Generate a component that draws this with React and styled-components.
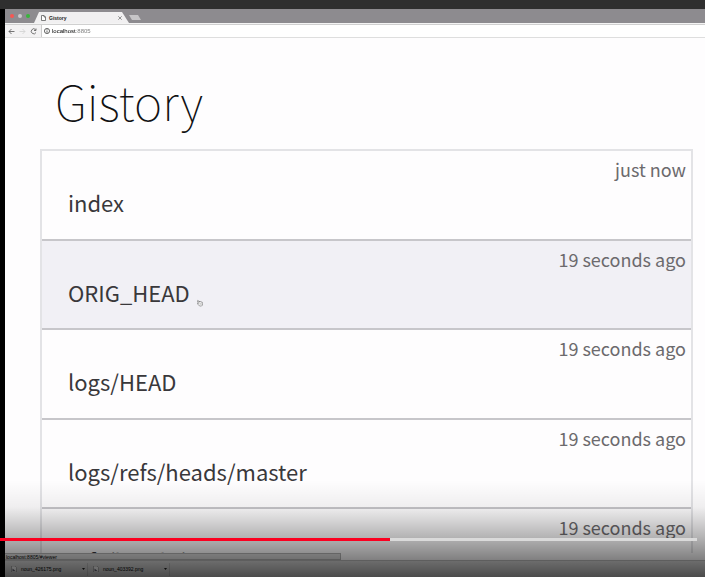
import React from "react";
import styled, { createGlobalStyle } from "styled-components";

const GlobalStyle = createGlobalStyle`
  *, *::before, *::after { box-sizing: border-box; }
  html, body { margin: 0; padding: 0; overflow: hidden; background: #fff; }
  button, input { font: inherit; color: inherit; border: 0; padding: 0; margin: 0; background: none; }
`;

const Page = styled.div`
  height: 100vh;
  display: flex;
  flex-direction: column;
  padding-bottom: 5px;
`;

const Player = styled.main`
  position: relative;
  flex: 1;
  min-height: 0;
  display: flex;
  padding: 9px 0 0 5px;
  background: linear-gradient(#2f2f2f 9px, #000 9px);
  overflow: hidden;
`;

const Browser = styled.section`
  flex: 1;
  min-width: 0;
  display: flex;
  flex-direction: column;
  background: #fefdfe;
  font-family: "Liberation Sans", Arial, sans-serif;
  font-size: 5px;
  color: #222;
`;

const TabStrip = styled.header`
  flex: none;
  height: 15px;
  display: flex;
  align-items: flex-end;
  background: #8d8b8f;
  border-bottom: 1px solid #f4f4f4;
`;

const WindowButtons = styled.div`
  display: flex;
  align-self: center;
  gap: 4px;
  padding-left: 5px;
`;

const WindowButton = styled.button`
  width: 4px;
  height: 4px;
  border-radius: 50%;
  background: ${(p) => p.$color};
`;

const Tab = styled.button`
  display: flex;
  align-items: center;
  gap: 3px;
  width: 95px;
  height: 11px;
  margin-left: 4px;
  padding: 0 7px;
  background: #f1f0f1;
  clip-path: polygon(5px 0, 88px 0, 100% 100%, 0 100%);
  font-weight: bold;
  svg { flex: none; }
  span { flex: 1; text-align: left; }
`;

const NewTab = styled.button`
  width: 12px;
  height: 5px;
  margin: 0 0 3px 0;
  background: #c6c5c7;
  clip-path: polygon(0 0, 9px 0, 100% 100%, 3px 100%);
`;

const Toolbar = styled.nav`
  flex: none;
  height: 14px;
  display: flex;
  align-items: center;
  padding-left: 3px;
  background: #f3f2f3;
  border-top: 1px solid #d0d0d0;
  border-bottom: 1px solid #dedede;
`;

const IconButton = styled.button`
  flex: none;
  display: flex;
  width: 11px;
  color: ${(p) => (p.$muted ? "#cfcfcf" : "#555")};
`;

const Address = styled.label`
  flex: 1;
  align-self: stretch;
  display: flex;
  align-items: center;
  gap: 2px;
  padding-left: 2px;
  background: #fff;
  border-left: 1px solid #ccc;
  font-size: 6px;
  input {
    flex: 1;
    min-width: 0;
    outline: 0;
    color: transparent;
    background: linear-gradient(90deg, #000 24px, #777 24px);
    background-clip: text;
  }
`;

const Content = styled.div`
  flex: 1;
  min-height: 0;
  overflow: hidden;
  padding: 30px 12px 0 35px;
  font-family: "Noto Sans CJK SC", "Noto Sans", sans-serif;
`;

const Title = styled.h1`
  margin: 0;
  padding-left: 15px;
  font-size: 48px;
  line-height: 64px;
  font-weight: 100;
  color: #111113;
`;

const FileList = styled.div`
  display: grid;
  grid-auto-rows: 90px 89px;
  margin-top: 17px;
  border: 2px solid #e3e3e6;
`;

const FileRow = styled.a`
  display: flex;
  flex-direction: column;
  padding: 4px 5px 0 26px;
  border-bottom: 2px solid #c7c6ca;
  background: ${(p) => (p.$active ? "#f1f0f5" : "transparent")};
  color: #39383b;
  text-decoration: none;
  white-space: nowrap;
`;

const Age = styled.time`
  align-self: flex-end;
  font-size: 18px;
  line-height: 28px;
  color: #6c6a6d;
`;

const FileName = styled.span`
  margin-top: 2px;
  font-size: 22px;
  line-height: 34px;
`;

const Status = styled.div`
  flex: none;
  width: 48%;
  height: 7px;
  padding: 0 1px;
  line-height: 6px;
  background: #dcdcdc;
  border: 1px solid #b4b4b4;
  border-left: 0;
  color: #000;
`;

const Shelf = styled.footer`
  flex: none;
  height: 17px;
  display: flex;
  align-items: center;
  padding-left: 1px;
  background: #dcdcdc;
  border-top: 1px solid #bcbcbc;
`;

const Download = styled.button`
  display: flex;
  align-items: center;
  gap: 4px;
  width: 82px;
  height: 13px;
  padding: 0 2px 0 5px;
  border-right: 1px solid #c2c2c2;
  color: #000;
  span { flex: 1; text-align: left; }
`;

const Shade = styled.div`
  position: absolute;
  inset: auto 0 0 0;
  height: 97px;
  pointer-events: none;
  background: linear-gradient(
    rgba(0, 0, 0, 0) 0,
    rgba(0, 0, 0, 0.06) 27px,
    rgba(0, 0, 0, 0.29) 57px,
    rgba(0, 0, 0, 0.48) 78px,
    rgba(0, 0, 0, 0.66) 97px
  );
`;

const Seek = styled.input`
  position: absolute;
  inset: auto 8px 36px 0;
  height: 3px;
  appearance: none;
  background: linear-gradient(90deg, #fb0020 56%, #dadada 56%);
  &::-webkit-slider-thumb { appearance: none; width: 0; height: 3px; }
`;

const Pointer = styled.svg`
  position: absolute;
  left: 197px;
  top: 299px;
`;

const files = [
  { name: "index", age: "just now" },
  { name: "ORIG_HEAD", age: "19 seconds ago", active: true },
  { name: "logs/HEAD", age: "19 seconds ago" },
  { name: "logs/refs/heads/master", age: "19 seconds ago" },
  { name: "refs/heads/master", age: "19 seconds ago" },
];

const Stroke = ({ d, size = 7 }) => (
  <svg width={size} height={size} viewBox="0 0 14 14" fill="none" stroke="currentColor" strokeWidth="1.6" aria-hidden="true">
    <path d={d} />
  </svg>
);

const PictureIcon = () => (
  <svg width="6" height="6" viewBox="0 0 12 12" aria-hidden="true">
    <path d="M1 0h7l3 3v9H1z" fill="#fff" stroke="#777" />
    <path d="M3 5l6 5H3z" fill="#667" />
  </svg>
);

export default function App() {
  return (
    <Page>
      <GlobalStyle />
      <Player>
        <Browser>
          <TabStrip>
            <WindowButtons>
              <WindowButton $color="#f75652" aria-label="Close window" />
              <WindowButton $color="#cbc9cc" aria-label="Minimise window" />
              <WindowButton $color="#39b53c" aria-label="Zoom window" />
            </WindowButtons>
            <Tab>
              <svg width="5" height="6" viewBox="0 0 10 12" fill="#fff" stroke="#555" strokeWidth="1.5" aria-hidden="true">
                <path d="M1 1h5l3 3v7H1zM6 1v3h3" />
              </svg>
              <span>Gistory</span>
              <Stroke size={4} d="M1 1l12 12M13 1L1 13" />
            </Tab>
            <NewTab aria-label="New tab" />
          </TabStrip>
          <Toolbar>
            <IconButton aria-label="Back"><Stroke d="M13 7H2M7 2L2 7l5 5" /></IconButton>
            <IconButton $muted aria-label="Forward"><Stroke d="M1 7h11M7 2l5 5-5 5" /></IconButton>
            <IconButton aria-label="Reload"><Stroke d="M12 9a5 5 0 1 1-1-6M12 1v4H8" /></IconButton>
            <Address>
              <Stroke size={6} d="M7 1a6 6 0 1 1 0 12A6 6 0 1 1 7 1M7 3v2M7 6v5" />
              <input aria-label="Address" defaultValue="localhost:8805" />
            </Address>
          </Toolbar>
          <Content>
            <Title>Gistory</Title>
            <FileList>
              {files.map((f) => (
                <FileRow key={f.name} href="#viewer" $active={f.active}>
                  <Age>{f.age}</Age>
                  <FileName>{f.name}</FileName>
                </FileRow>
              ))}
            </FileList>
          </Content>
          <Status>localhost:8805/#viewer</Status>
          <Shelf>
            {["noun_426175.png", "noun_403392.png"].map((name) => (
              <Download key={name}>
                <PictureIcon />
                <span>{name}</span>
                <svg width="3" height="2" viewBox="0 0 6 4" aria-hidden="true"><path d="M0 0h6L3 4z" fill="#222" /></svg>
              </Download>
            ))}
          </Shelf>
        </Browser>
        <Pointer width="6" height="8" viewBox="0 0 16 18" fill="#fff" stroke="#555" strokeWidth="1.5" aria-hidden="true">
          <path d="M4 10L1 3q1-2 3 0l2 4 1-3 2 2 2-1 1 2 2 0 1 3-1 5-2 2H7L3 13l-2-3q1-1 3 0zM8 10v3M11 10v3" />
        </Pointer>
        <Shade />
        <Seek type="range" min="0" max="100" defaultValue="56" aria-label="Seek" />
      </Player>
    </Page>
  );
}
